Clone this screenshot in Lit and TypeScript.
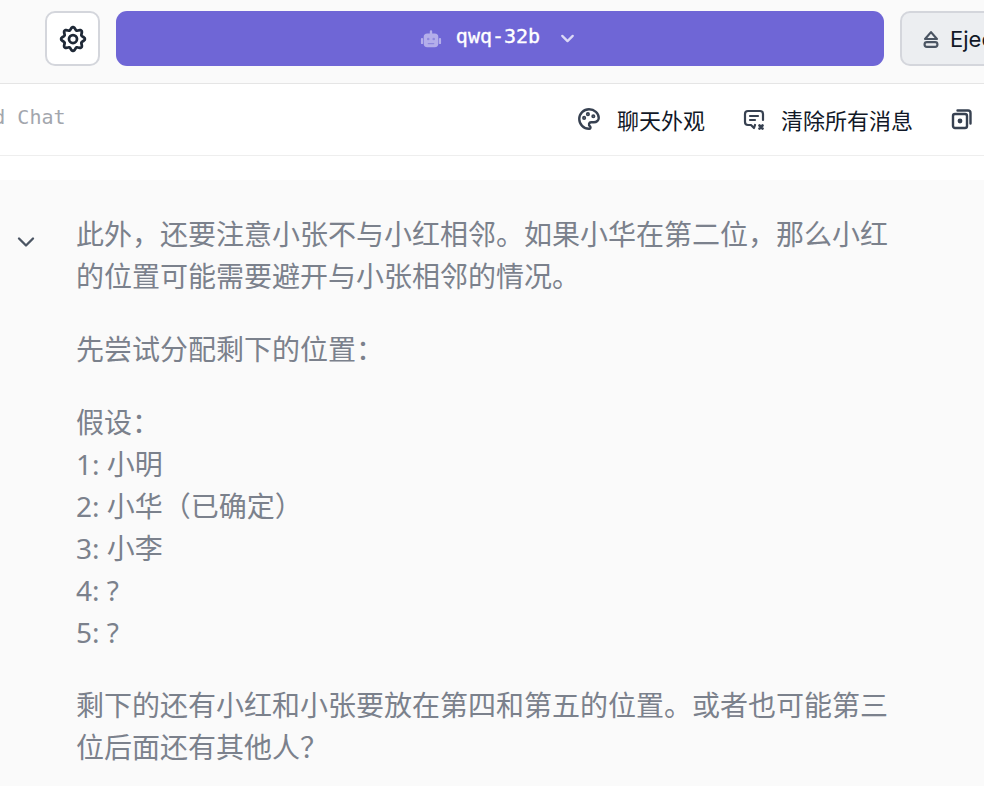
import { LitElement, html, css, svg } from "lit";
import { customElement } from "lit/decorators.js";

const icon = (paths: unknown, size: number, cls = "", sw = 2) => html`<svg class=${cls} width=${size} height=${size} viewBox="0 0 24 24" fill="none" stroke="currentColor" stroke-width=${sw} stroke-linecap="round" stroke-linejoin="round">${paths}</svg>`;

const gearOutline = Array.from({ length: 96 }, (_, i) => {
  const a = (i / 96) * Math.PI * 2;
  const r = 8.4 + 1.1 * Math.cos(8 * a);
  return `${(12 + r * Math.cos(a)).toFixed(2)} ${(12 + r * Math.sin(a)).toFixed(2)}`;
}).join("L");
const gear = svg`<path d=${"M" + gearOutline + "Z"}/><circle cx="12" cy="12" r="3.200"/>`;
const chevron = svg`<path d="M6 9l6 6 6-6"/>`;
const robot = svg`<path stroke="none" fill="currentColor" d="M12 2.500a1.300 1.300 0 0 1 1.300 1.300V6H16a4 4 0 0 1 4 4v7a4 4 0 0 1-4 4H8a4 4 0 0 1-4-4v-7a4 4 0 0 1 4-4h2.700V3.800A1.300 1.300 0 0 1 12 2.500z"/><rect stroke="none" fill="currentColor" x="1" y="11" width="2.400" height="6.500" rx="1"/><rect stroke="none" fill="currentColor" x="20.600" y="11" width="2.400" height="6.500" rx="1"/><circle cx="9" cy="12" r="1.400" fill="#8f88de" stroke="none"/><circle cx="15" cy="12" r="1.400" fill="#8f88de" stroke="none"/><path d="M9 17h6" stroke="#8f88de" stroke-width="1.300"/>`;
const eject = svg`<path d="M12 4.500l6.500 7.500H5.500z"/><rect x="5" y="15.500" width="14" height="5" rx="2.500"/>`;
const palette = svg`<path d="M12 21a9 9 0 0 1 0-18c4.970 0 9 3.580 9 8 0 1.060-.470 2.080-1.320 2.830-.840.750-1.990 1.170-3.180 1.170H14a2 2 0 0 0-1 3.750A1.300 1.300 0 0 1 12 21"/><circle cx="7.500" cy="11" r=".8"/><circle cx="11" cy="7.500" r=".8"/><circle cx="16" cy="9.500" r=".8"/>`;
const msgX = svg`<path d="M8 9h8M8 13h5"/><path d="M13 18l-1 3-3-3H6a3 3 0 0 1-3-3V7a3 3 0 0 1 3-3h12a3 3 0 0 1 3 3v6"/><path d="M17.500 18.500l3 3m0-3l-3 3" stroke-width="2.600"/>`;
const copyBox = svg`<path d="M7.500 3.500H18a2.500 2.500 0 0 1 2.500 2.500v10.500"/><rect x="3" y="7" width="14" height="14" rx="2"/><circle cx="10" cy="14" r="2.400" fill="currentColor" stroke="none"/>`;

const paragraphs: string[][] = [
  ["此外，还要注意小张不与小红相邻。如果小华在第二位，那么小红的位置可能需要避开与小张相邻的情况。"],
  ["先尝试分配剩下的位置："],
  ["假设：", "1: 小明", "2: 小华（已确定）", "3: 小李", "4: ?", "5: ?"],
  ["剩下的还有小红和小张要放在第四和第五的位置。或者也可能第三位后面还有其他人？"],
];

@customElement("app-root")
export class AppRoot extends LitElement {
  static styles = css`
    :host {
      display: block;
      width: 984px;
      height: 786px;
      overflow: hidden;
      background: #fafafa;
      font-family: Inter, "Noto Sans CJK SC", sans-serif;
    }
    .top {
      display: flex;
      gap: 16px;
      align-items: center;
      height: 77px;
      padding: 0 0 6px 45px;
      width: 1200px;
      border-bottom: 1px solid #e5e5e5;
    }
    .gear {
      width: 55px;
      height: 55px;
      box-sizing: border-box;
      border: 2px solid #d4d6dc;
      border-radius: 10px;
      background: #fff;
      display: flex;
      align-items: center;
      justify-content: center;
      color: #1f2937;
    }
    .model {
      width: 768px;
      height: 55px;
      border-radius: 11px;
      background: #6f66d6;
      color: #fff;
      display: flex;
      align-items: center;
      justify-content: center;
      font-family: "DejaVu Sans Mono", monospace;
      font-size: 20px;
    }
    .robot { color: #b4aeea; margin-right: 14px; margin-left: -2px; }
    .chev { margin-left: 17px; color: #dcd9f6; }
    .model span { position: relative; top: -3px; -webkit-text-stroke: 0.35px #fff; }
    .eject {
      width: 200px;
      height: 55px;
      box-sizing: border-box;
      border: 2px solid #d4d6dc;
      border-radius: 10px;
      background: #eceef1;
      display: flex;
      align-items: center;
      padding-left: 18px;
      gap: 8px;
      color: #111827;
      font-size: 22px;
    }
    .eject svg { color: #4b5563; }
    .bar {
      height: 71px;
      background: #fff;
      border-bottom: 1px solid #eeeeee;
      display: flex;
      align-items: center;
      white-space: nowrap;
      font-size: 22px;
      color: #111827;
    }
    .title {
      font-family: "DejaVu Sans Mono", monospace;
      font-size: 20px;
      color: #a3a6ad;
      margin-left: -91px;
      width: 667px;
      position: relative;
      top: -3px;
      flex: none;
    }
    .act { display: flex; align-items: center; gap: 15px; color: #111827; position: relative; top: -1px; }
    .act svg { color: #374151; }
    .bar .act + .act { margin-left: 37px; }
    .bar .act.copy { margin-left: 37px; }
    .spacer { height: 24px; background: #fff; }
    .body { display: flex; padding-top: 33px; }
    .side { width: 76px; flex: none; padding: 15px 0 0 12px; box-sizing: border-box; color: #4b5563; }
    .content {
      width: 815px;
      font-family: "Noto Sans", "Noto Sans CJK SC", sans-serif;
      font-size: 28px;
      line-height: 42px;
      color: #7b818c;
      flex: none;
    }
    .content p { margin: 0 0 31px; }
  `;

  render() {
    return html`
      <div class="top">
        <div class="gear">${icon(gear, 30, "", 2.2)}</div>
        <div class="model">
          ${icon(robot, 22, "robot")}<span>qwq-32b</span>${icon(chevron, 21, "chev", 2.6)}
        </div>
        <div class="eject">${icon(eject, 22, "", 2.4)}Eject</div>
      </div>
      <div class="bar">
        <div class="title">Untitled Chat</div>
        <div class="act">${icon(palette, 26, "", 2.2)}聊天外观</div>
        <div class="act">${icon(msgX, 24, "", 2.2)}清除所有消息</div>
        <div class="act copy">${icon(copyBox, 24, "", 2.4)}</div>
      </div>
      <div class="spacer"></div>
      <div class="body">
        <div class="side">${icon(chevron, 28)}</div>
        <div class="content">
          ${paragraphs.map((p) => html`<p>${p.map((l, i) => html`${i ? html`<br />` : ""}${l}`)}</p>`)}
        </div>
      </div>
    `;
  }
}
